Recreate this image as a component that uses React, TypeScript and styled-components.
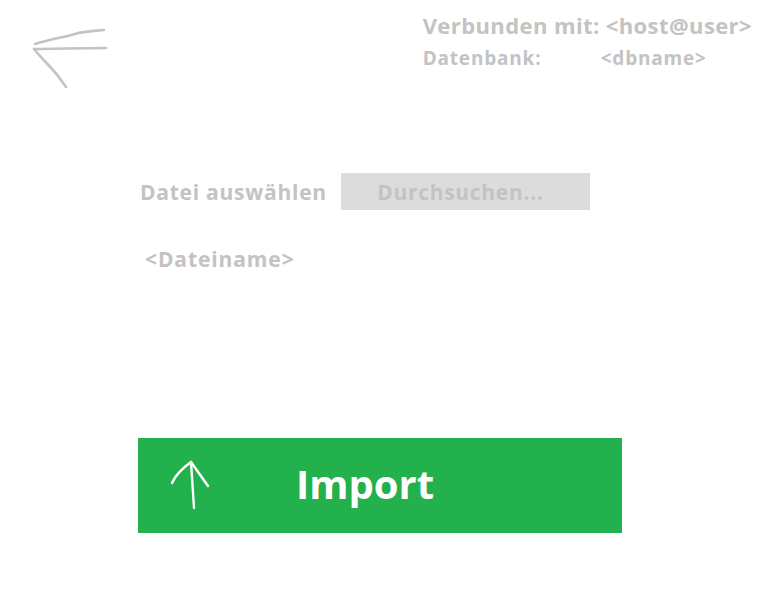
import React from "react";
import styled, { createGlobalStyle } from "styled-components";

const GlobalStyle = createGlobalStyle`
  html, body {
    margin: 0;
    padding: 0;
    background: #ffffff;
  }
  body {
    font-family: "Open Sans", "Noto Sans", "Liberation Sans", sans-serif;
    font-weight: 700;
    color: #c3c3c3;
  }
`;

const Page = styled.div`
  width: 768px;
  height: 614px;
  display: flex;
  flex-direction: column;
  box-sizing: border-box;
`;

const TopBar = styled.header`
  display: flex;
  justify-content: space-between;
  align-items: flex-start;
  padding: 10px 16px 0 30px;
`;

const BackButton = styled.button`
  border: 0;
  background: none;
  padding: 0;
  margin-top: 18px;
  cursor: pointer;
  display: block;
`;

const Connection = styled.div`
  display: flex;
  flex-direction: column;
`;

const ConnectionLine = styled.div`
  font-size: 22px;
  letter-spacing: 0.4px;
  line-height: 30px;
  white-space: nowrap;
`;

const DbLine = styled.div`
  display: flex;
  font-size: 19px;
  letter-spacing: 0.8px;
  line-height: 26px;
  margin-top: 5px;
`;

const DbLabel = styled.span`
  width: 178px;
`;

const Main = styled.main`
  display: flex;
  flex-direction: column;
  align-items: flex-start;
  padding: 80px 0 0 138px;
`;

const FileRow = styled.div`
  display: flex;
  align-items: center;
  gap: 14px;
`;

const FieldLabel = styled.span`
  font-size: 21px;
  letter-spacing: 0.75px;
  padding-left: 2px;
`;

const BrowseButton = styled.button`
  width: 249px;
  height: 37px;
  border: 0;
  background: #dcdcdc;
  color: #c3c3c3;
  font-family: inherit;
  font-weight: 700;
  font-size: 21px;
  letter-spacing: 0.7px;
  padding: 0 10px 0 0;
  cursor: pointer;
`;

const FileName = styled.div`
  font-size: 21px;
  letter-spacing: 0.9px;
  margin: 35px 0 0 7px;
`;

const ImportButton = styled.button`
  margin-top: 165px;
  width: 484px;
  height: 95px;
  border: 0;
  background: #22b14c;
  color: #ffffff;
  font-family: inherit;
  font-weight: 700;
  font-size: 40px;
  display: flex;
  align-items: center;
  padding: 0 0 0 32px;
  cursor: pointer;
`;

const ImportLabel = styled.span`
  margin-left: 84px;
  margin-top: -4px;
`;

const BackArrow = () => (
  <svg width="80" height="62" viewBox="0 0 80 62" fill="none">
    <g stroke="#c3c3c3" strokeWidth="2.6" strokeLinecap="round" strokeLinejoin="round">
      <path d="M5 16 C 20 11, 35 9, 45 6 S 65 3, 74 2" />
      <path d="M4 21 C 25 21, 50 20, 76 20" />
      <path d="M4 21 C 12 31, 22 40, 28 48 L 36 59" />
    </g>
  </svg>
);

const UpArrow = () => (
  <svg width="42" height="52" viewBox="0 0 42 52" fill="none">
    <g stroke="#ffffff" strokeWidth="2.4" strokeLinecap="round" strokeLinejoin="round">
      <path d="M2 23 C 5 16, 10 10, 21 2 C 26 9, 31 16, 38 26" />
      <path d="M21 2 C 22 18, 23 34, 24 48" />
    </g>
  </svg>
);

export default function App() {
  return (
    <>
      <GlobalStyle />
      <Page>
        <TopBar>
          <BackButton aria-label="Zurück">
            <BackArrow />
          </BackButton>
          <Connection>
            <ConnectionLine>Verbunden mit: &lt;host@user&gt;</ConnectionLine>
            <DbLine>
              <DbLabel>Datenbank:</DbLabel>
              <span>&lt;dbname&gt;</span>
            </DbLine>
          </Connection>
        </TopBar>
        <Main>
          <FileRow>
            <FieldLabel>Datei auswählen</FieldLabel>
            <BrowseButton>Durchsuchen...</BrowseButton>
          </FileRow>
          <FileName>&lt;Dateiname&gt;</FileName>
          <ImportButton>
            <UpArrow />
            <ImportLabel>Import</ImportLabel>
          </ImportButton>
        </Main>
      </Page>
    </>
  );
}
